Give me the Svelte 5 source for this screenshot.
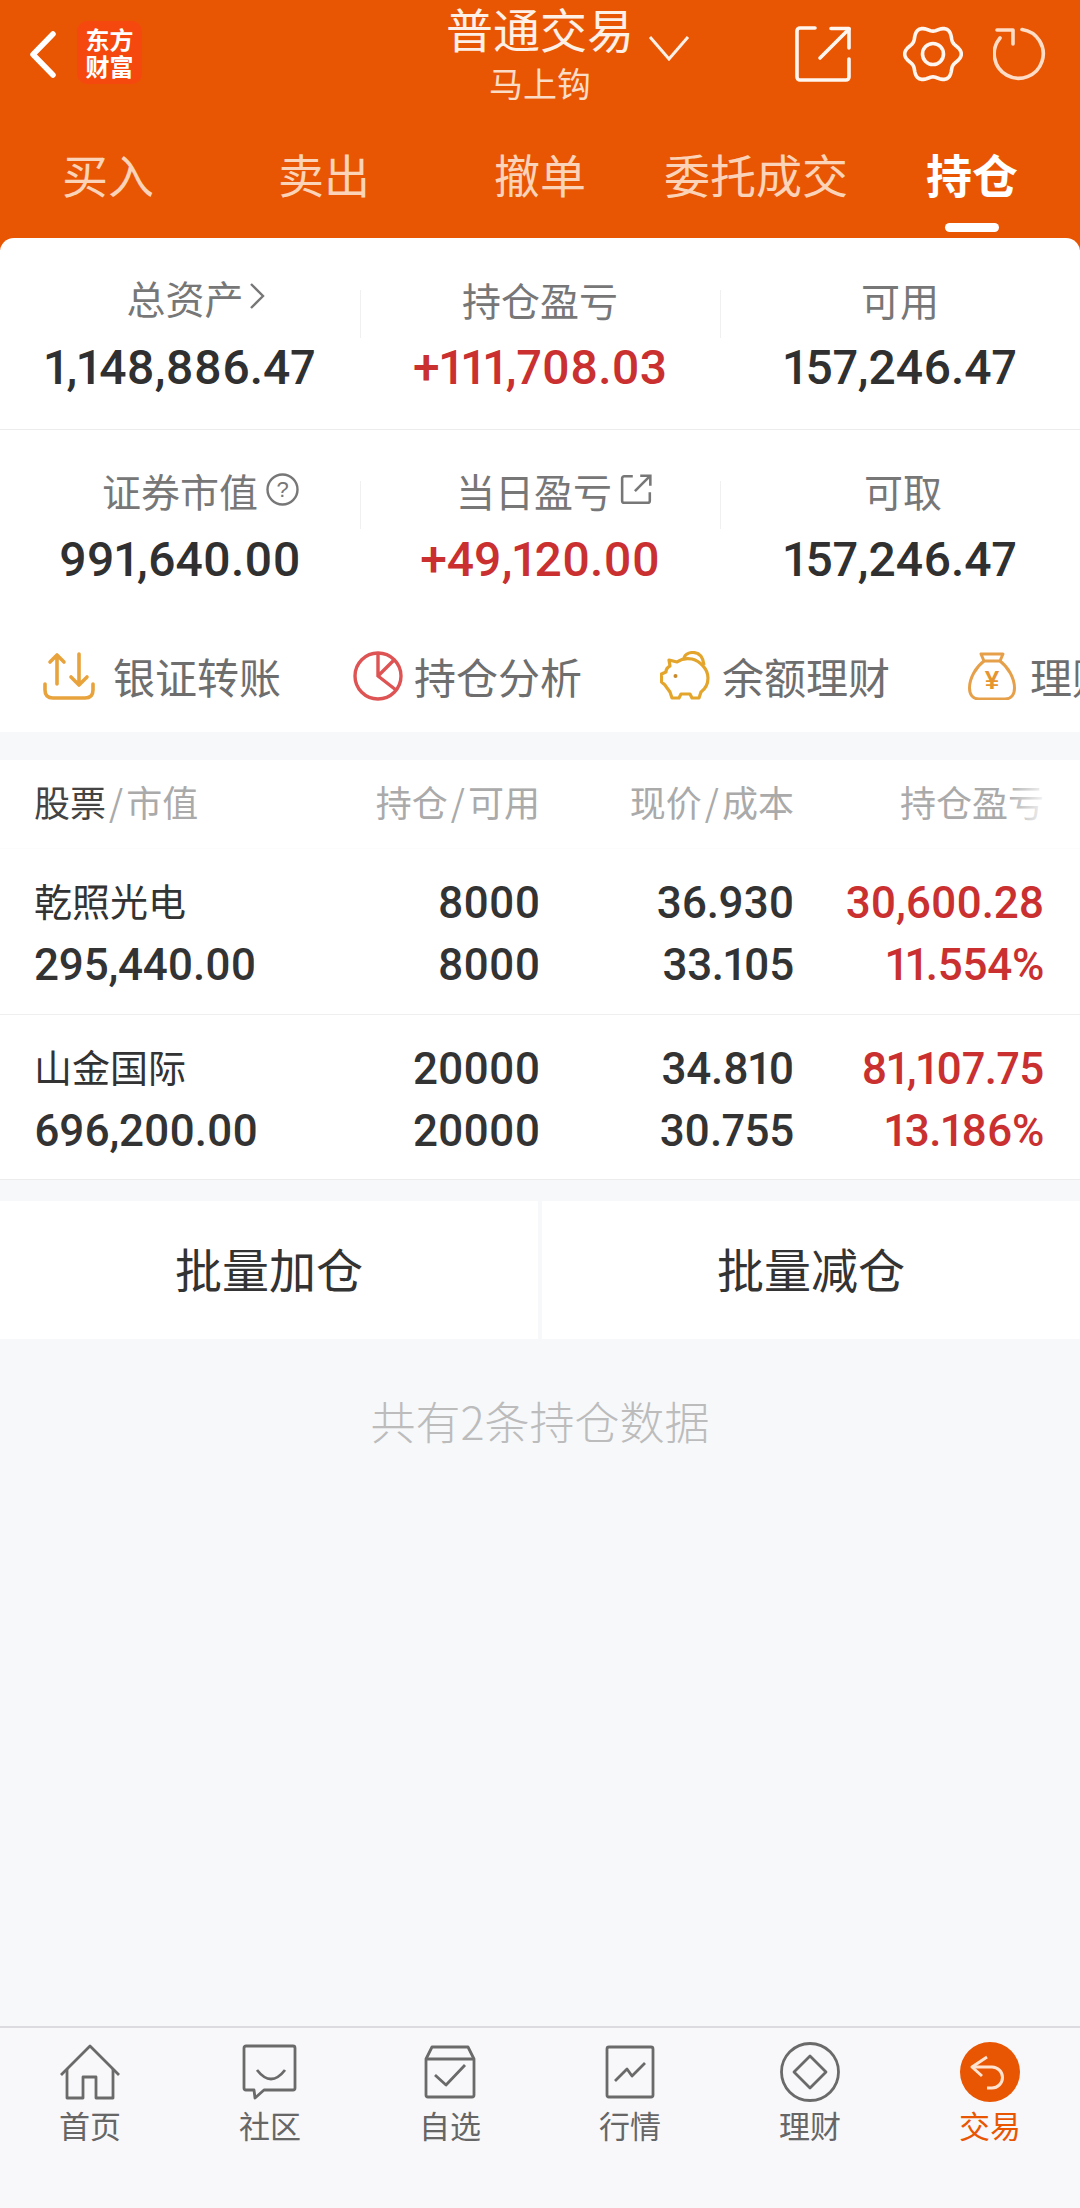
<script>
    const tabs = ['买入', '卖出', '撤单', '委托成交', '持仓']
    const activeTab = '持仓'

    const holdings = [
        {name: '乾照光电', value: '295,440.00', total: '8000', free: '8000', price: '36.930', cost: '33.105', profit: '30,600.28', pct: '11.554%'},
        {name: '山金国际', value: '696,200.00', total: '20000', free: '20000', price: '34.810', cost: '30.755', profit: '81,107.75', pct: '13.186%'},
    ]

    const navItems = ['首页', '社区', '自选', '行情', '理财', '交易']

    // wavy six lobed outline for the settings icon
    function gearPath(cx, cy) {
        let pts = []
        for (let i = 0; i < 120; i++) {
            const t = (i / 120) * Math.PI * 2
            const r = 25.6 + 2.7 * Math.cos(6 * t)
            pts.push(`${(cx + r * Math.cos(t)).toFixed(2)} ${(cy + r * Math.sin(t)).toFixed(2)}`)
        }
        return 'M' + pts.join('L') + 'Z'
    }
</script>

<div class="page">
    <header class="head">
        <div class="topbar">
            <div class="top-left">
                <svg class="back" width="27" height="47" viewBox="0 0 27 47"><path d="M24 3 L4 23.5 L24 44"/></svg>
                <div class="logo"><span>东方</span><span>财富</span></div>
            </div>
            <div class="title">
                <div class="title-main">普通交易
                    <svg class="chevron" width="42" height="26" viewBox="0 0 42 26"><path d="M2 2 L21 24 L40 2"/></svg>
                </div>
                <div class="title-sub">马上钩</div>
            </div>
            <div class="top-right">
                <svg width="58" height="58" viewBox="0 0 58 58" class="ico-w"><path d="M21 3 H6 a3 3 0 0 0 -3 3 V52 a3 3 0 0 0 3 3 H52 a3 3 0 0 0 3 -3 V34"/><path d="M26 33 L55 4"/><path d="M37 3.5 H55 V23"/></svg>
                <svg width="60" height="60" viewBox="0 0 60 60" class="ico-w"><path d={gearPath(30, 30)}/><circle cx="30" cy="30" r="10.5"/></svg>
                <svg width="54" height="54" viewBox="0 0 54 54" class="ico-w faded"><path d="M29 2.5 A24.5 24.5 0 1 1 7 11"/><path d="M4 3 H20 V17"/></svg>
            </div>
        </div>
        <nav class="tabs">
            {#each tabs as tab}
                <div class="tab" class:active={tab === activeTab}>
                    <span>{tab}</span>
                    <i class="marker"></i>
                </div>
            {/each}
        </nav>
    </header>

    <section class="summary">
        <div class="stats first">
            <div class="stat">
                <div class="label shift-a">总资产<svg class="after chev" width="16" height="28" viewBox="0 0 16 28"><path d="M2 2 L14 14 L2 26"/></svg></div>
                <div class="amount">1,148,886.47</div>
            </div>
            <div class="stat">
                <div class="label">持仓盈亏</div>
                <div class="amount red">+111,708.03</div>
            </div>
            <div class="stat">
                <div class="label">可用</div>
                <div class="amount">157,246.47</div>
            </div>
        </div>
        <div class="stats second">
            <div class="stat">
                <div class="label">证券市值<svg class="after" width="33" height="33" viewBox="0 0 33 33"><circle cx="16.5" cy="16.5" r="15"/><text x="16.5" y="23.5" text-anchor="middle">?</text></svg></div>
                <div class="amount">991,640.00</div>
            </div>
            <div class="stat">
                <div class="label shift-b">当日盈亏<svg class="after" width="33" height="33" viewBox="0 0 31 31"><path d="M12 3 H4 a2 2 0 0 0 -2 2 V26 a2 2 0 0 0 2 2 H26 a2 2 0 0 0 2 -2 V18"/><path d="M14 17 L28 3"/><path d="M19 2.5 H28.5 V12"/></svg></div>
                <div class="amount red">+49,120.00</div>
            </div>
            <div class="stat">
                <div class="label shift-c">可取</div>
                <div class="amount">157,246.47</div>
            </div>
        </div>

        <div class="shortcuts">
            <div class="shortcut wide">
                <svg width="52" height="48" viewBox="0 0 52 48" class="ico-transfer"><path d="M14 32 V3 M7 10 L14 3 L21 10"/><path d="M36 32 V2 M28 25 L36 33 L44 25"/><path d="M2 32 V38 q0 8 8 8 H42 q8 0 8 -8 V32"/></svg>
                <span>银证转账</span>
            </div>
            <div class="shortcut tight">
                <svg width="50" height="50" viewBox="0 0 50 50" class="ico-pie"><circle cx="25" cy="25" r="23"/><path d="M25 2 V25 L43 39 M25 25 L41 9"/></svg>
                <span>持仓分析</span>
            </div>
            <div class="shortcut pig">
                <svg width="50" height="49" viewBox="0 0 50 49" class="ico-pig"><path d="M9 9 L17 11 C21 8 27 7 32 8 C40 10 48 18 48 27 C48 33 45 38 41 41 L39 47 H32 L30 43 H21 L19 47 H12 L10 41 C8 38 6 36 5 34 L1.5 31 V23 L6 21 C6 18 8 16 10 15 Z"/><path d="M24 8 C24 4 28 1.500 33 1.500 C39 1.500 43 6 44 14"/><circle class="dot" cx="15.500" cy="25" r="2"/></svg>
                <span>余额理财</span>
            </div>
            <div class="shortcut">
                <svg width="48" height="48" viewBox="0 0 48 48" class="ico-bag"><path d="M13 2 H35 L32 9 H16 Z"/><path d="M16 9 C8 15 1.500 26 1.500 36 C1.500 43 5 47 11 47 H37 C43 47 46.500 43 46.500 36 C46.500 26 40 15 32 9"/><text x="24" y="37" text-anchor="middle">¥</text></svg>
                <span>理财产品</span>
            </div>
        </div>
    </section>

    <section class="positions">
        <div class="grid grid-head">
            <div class="hd-left"><b>股票</b><i>/</i>市值</div>
            <div>持仓<i>/</i>可用</div>
            <div>现价<i>/</i>成本</div>
            <div class="faded-end">持仓盈亏</div>
        </div>
        {#each holdings as h}
            <div class="grid row">
                <div class="stock"><div class="cn">{h.name}</div><div>{h.value}</div></div>
                <div><div>{h.total}</div><div>{h.free}</div></div>
                <div><div>{h.price}</div><div>{h.cost}</div></div>
                <div class="red"><div>{h.profit}</div><div>{h.pct}</div></div>
            </div>
        {/each}
    </section>

    <div class="actions">
        <div class="action">批量加仓</div>
        <div class="action">批量减仓</div>
    </div>

    <p class="count">共有2条持仓数据</p>

    <div class="spacer"></div>

    <footer class="bottom-nav">
        {#each navItems as item, i}
            <div class="nav-item" class:current={i === 5}>
                <div class="nav-icon">
                    {#if i === 0}
                        <svg width="60" height="56" viewBox="0 0 60 56"><path d="M1 31 L30 2 L59 31"/><path d="M7 25 V54 H23 V33 H36 V54 H53 V25"/></svg>
                    {:else if i === 1}
                        <svg width="56" height="56" viewBox="0 0 56 56"><path d="M4 2 H51 a2 2 0 0 1 2 2 V44 a2 2 0 0 1 -2 2 H22 L13 54 L12 46 H4 a2 2 0 0 1 -2 -2 V4 a2 2 0 0 1 2 -2 Z"/><path d="M15 26 Q29 44 43 26"/></svg>
                    {:else if i === 2}
                        <svg width="52" height="54" viewBox="0 0 52 54"><path d="M8 2 H44 L50 14 V50 a2 2 0 0 1 -2 2 H4 a2 2 0 0 1 -2 -2 V14 Z"/><path d="M2 14 H50"/><path d="M11 30 L22 40 L41 20"/></svg>
                    {:else if i === 3}
                        <svg width="50" height="54" viewBox="0 0 50 54"><rect x="2" y="2" width="46" height="50" rx="2"/><path d="M10 36 L22 24 L27 31 L40 18"/></svg>
                    {:else if i === 4}
                        <svg width="60" height="60" viewBox="0 0 60 60"><circle cx="30" cy="30" r="28.500"/><path d="M30 14 L46 30 L30 46 L14 30 Z"/></svg>
                    {:else}
                        <svg width="60" height="60" viewBox="0 0 60 60" class="trade"><circle class="disc" cx="30" cy="30" r="30"/><path d="M27 15 L12 25 L22 34"/><path d="M12 25 H32 a10.500 10.500 0 0 1 0 21 H27"/></svg>
                    {/if}
                </div>
                <div class="nav-label">{item}</div>
            </div>
        {/each}
    </footer>
</div>

<style>
    :global(body) {
        margin: 0;
        background: #f7f8fa;
    }

    .page {
        display: flex;
        flex-direction: column;
        width: 1080px;
        height: 2208px;
        overflow: hidden;
        font-family: "Noto Sans CJK SC", "Liberation Sans", sans-serif;
        color: #333;
    }

    svg {
        display: block;
        flex: none;
        fill: none;
    }

    /* header */
    .head {
        height: 250px;
        margin-bottom: -12px;
        background: #e85604;
        color: #fff;
    }

    .topbar {
        display: grid;
        grid-template-columns: 1fr auto 1fr;
        align-items: center;
        height: 108px;
    }

    .top-left {
        display: flex;
        align-items: center;
        gap: 21px;
        padding-left: 29px;
    }

    .back path {
        stroke: #fff;
        stroke-width: 5.5;
        stroke-linecap: round;
        stroke-linejoin: round;
    }

    .logo {
        display: flex;
        flex-direction: column;
        align-items: center;
        justify-content: center;
        width: 65px;
        height: 63px;
        margin-top: -4px;
        border-radius: 10px;
        background: #f5480f;
        font-size: 24px;
        font-weight: 700;
        line-height: 27px;
    }

    .title {
        align-self: start;
        padding-top: 2px;
        text-align: center;
    }

    .title-main {
        position: relative;
        font-size: 47px;
        line-height: 52px;
        color: #fdf0e6;
    }

    .chevron {
        position: absolute;
        left: calc(100% + 14px);
        top: 33px;
    }

    .chevron path {
        stroke: #fdf0e6;
        stroke-width: 3;
    }

    .title-sub {
        margin-top: 4px;
        font-size: 34px;
        line-height: 50px;
        color: #fbdcc6;
    }

    .top-right {
        display: flex;
        align-items: center;
        justify-content: flex-end;
        gap: 30px;
        padding-right: 33px;
    }

    .top-right svg:nth-child(2) {
        margin-left: 21px;
    }

    .ico-w path, .ico-w circle {
        stroke: #fff6f0;
        stroke-width: 3.6;
        stroke-linecap: round;
        stroke-linejoin: round;
    }

    .ico-w.faded path {
        stroke: #ffdcc6;
    }

    .tabs {
        display: grid;
        grid-template-columns: repeat(5, 216px);
        padding-top: 35px;
    }

    .tab {
        display: flex;
        flex-direction: column;
        align-items: center;
        font-size: 46px;
        line-height: 60px;
        color: #fbd3b8;
    }

    .marker {
        display: block;
        width: 54px;
        height: 9px;
        margin-top: 20px;
        border-radius: 5px;
    }

    .tab.active {
        font-weight: 700;
        color: #fff;
    }

    .tab.active .marker {
        background: #fff;
    }

    /* summary card */
    .summary {
        position: relative;
        height: 494px;
        border-radius: 14px 14px 0 0;
        background: #fff;
        overflow: hidden;
    }

    .stats {
        display: grid;
        grid-template-columns: repeat(3, 360px);
    }

    .stats.first {
        height: 192px;
        padding-top: 36px;
        box-sizing: border-box;
        border-bottom: 1px solid #ececec;
    }

    .stats.second {
        height: 189px;
        padding-top: 35px;
        box-sizing: border-box;
    }

    .stats.first .amount {
        margin-top: 14px;
    }

    .stats.second .amount {
        margin-top: 15px;
    }

    .stat {
        position: relative;
        display: flex;
        flex-direction: column;
        align-items: center;
    }

    .stat + .stat::before {
        content: '';
        position: absolute;
        left: 0;
        top: 16px;
        width: 1px;
        height: 48px;
        background: #f0f0f0;
    }

    .label {
        position: relative;
        font-size: 39px;
        line-height: 50px;
        color: #777;
    }

    .shift-a { margin-left: 10px; margin-top: -2px; margin-bottom: 2px; }
    .shift-b { margin-left: -12px; }
    .shift-c { margin-left: 6px; }

    .label svg {
        position: absolute;
        left: calc(100% + 8px);
        top: 8px;
    }

    .label .chev {
        top: 10px;
        left: calc(100% + 5px);
    }

    .label svg path, .label svg circle {
        stroke: #777;
        stroke-width: 2.4;
    }

    .label svg text {
        font-family: "Liberation Sans", sans-serif;
        font-size: 22px;
        fill: #777;
    }

    .amount {
        font-family: Roboto, "Liberation Sans", sans-serif;
        font-size: 48px;
        font-weight: 500;
        font-variant-numeric: proportional-nums;
        line-height: 60px;
        color: #303030;
    }

    .amount.red, .red {
        color: #c9302f;
    }

    .shortcuts {
        display: flex;
        align-items: center;
        gap: 78px;
        height: 113px;
        padding-left: 43px;
        white-space: nowrap;
    }

    .shortcut {
        display: flex;
        align-items: center;
        flex: none;
        gap: 14px;
        font-size: 42px;
        color: #6e6e6e;
    }

    .shortcut.wide {
        gap: 18px;
        margin-right: -6px;
    }

    .shortcut.tight {
        gap: 11px;
    }

    .shortcut.pig {
        gap: 12px;
    }

    .ico-transfer path {
        stroke: #e8a33d;
        stroke-width: 3.6;
        stroke-linecap: round;
        stroke-linejoin: round;
    }

    .ico-pie circle, .ico-pie path {
        stroke: #de5353;
        stroke-width: 3.4;
    }

    .ico-pig path {
        stroke: #e3a52c;
        stroke-width: 3.2;
        stroke-linejoin: round;
    }

    .ico-pig .dot {
        fill: #c98a2a;
    }

    .ico-bag path {
        stroke: #e6a04a;
        stroke-width: 3;
        stroke-linejoin: round;
    }

    .ico-bag text {
        font-family: "Liberation Sans", sans-serif;
        font-size: 26px;
        font-weight: 700;
        fill: #e6952f;
    }

    /* positions table */
    .positions {
        margin-top: 28px;
        background: #fff;
        border-bottom: 1px solid #ececec;
    }

    .grid {
        display: grid;
        grid-template-columns: 1fr 190px 254px 250px;
        padding: 0 36px 0 34px;
        text-align: right;
    }

    .grid-head {
        position: relative;
        align-items: center;
        height: 89px;
        padding-bottom: 6px;
        box-sizing: border-box;
        border-bottom: 1px solid #fcfcfc;
        font-size: 36px;
        color: #aaa;
    }

    .grid-head i {
        font-style: normal;
        margin: 0 3px;
    }

    .hd-left {
        text-align: left;
    }

    .hd-left b {
        font-weight: 400;
        color: #444;
    }

    .faded-end::after {
        content: '';
        position: absolute;
        right: 30px;
        top: 20px;
        width: 44px;
        height: 50px;
        background: linear-gradient(to right, rgba(255, 255, 255, 0), #fff);
    }

    .row {
        height: 166px;
        padding-top: 23px;
        box-sizing: border-box;
        font-family: Roboto, "Liberation Sans", sans-serif;
        font-size: 44px;
        font-weight: 500;
        font-variant-numeric: proportional-nums;
        letter-spacing: -0.3px;
        line-height: 62px;
        border-bottom: 1px solid #efefef;
    }

    .row:last-child {
        height: 164px;
        border-bottom: 0;
    }

    .stock {
        text-align: left;
    }

    .cn {
        font-family: "Noto Sans CJK SC", sans-serif;
        font-size: 38px;
        font-weight: 400;
        letter-spacing: 0;
        margin: -3px 0 3px;
    }

    /* batch buttons */
    .actions {
        display: flex;
        gap: 4px;
        margin-top: 21px;
    }

    .action {
        flex: 1;
        height: 138px;
        background: #fff;
        font-size: 47px;
        line-height: 133px;
        text-align: center;
        color: #333;
    }

    .count {
        margin: 49px 0 0;
        font-size: 45px;
        font-weight: 300;
        line-height: 66px;
        text-align: center;
        color: #bcbcbc;
    }

    .spacer {
        flex: 1;
    }

    /* bottom nav */
    .bottom-nav {
        display: grid;
        grid-template-columns: repeat(6, 180px);
        height: 182px;
        padding-top: 14px;
        box-sizing: border-box;
        border-top: 2px solid #dcdce0;
        background: #f8f8fa;
    }

    .nav-item {
        display: flex;
        flex-direction: column;
        align-items: center;
        color: #666;
    }

    .nav-icon {
        display: flex;
        align-items: center;
        justify-content: center;
        height: 60px;
    }

    .nav-icon svg path, .nav-icon svg circle, .nav-icon svg rect {
        stroke: #6a6a6a;
        stroke-width: 2.8;
        stroke-linejoin: round;
    }

    .nav-icon .trade .disc {
        fill: #e85604;
        stroke: none;
    }

    .nav-icon .trade path {
        stroke: #ffe3d0;
        stroke-width: 3;
    }

    .nav-label {
        margin-top: 3px;
        font-size: 31px;
        line-height: 40px;
    }

    .nav-item.current {
        color: #e85604;
    }
</style>
